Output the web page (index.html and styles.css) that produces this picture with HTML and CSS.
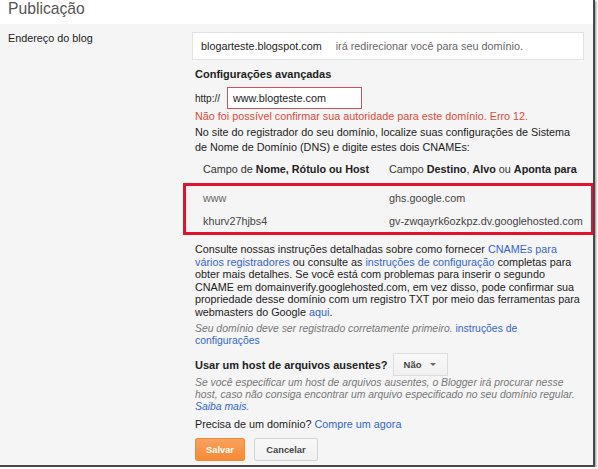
FILE: index.html
```html
<!DOCTYPE html>
<html lang="pt-BR">
<head>
<meta charset="utf-8">
<title>Publicação</title>
<link rel="stylesheet" href="styles.css">
</head>
<body>
<div class="frame">
  <div class="title">Publicação</div>
  <div class="main">
    <div class="label">Endereço do blog</div>
    <div class="content">
      <div class="addr-box">
        <span class="addr">blogarteste.blogspot.com</span>
        <span class="addr-note">irá redirecionar você para seu domínio.</span>
      </div>
      <div class="sub-head">Configurações avançadas</div>
      <div class="http-row">
        <span class="http">http://</span>
        <span class="domain-input">www.blogteste.com</span>
      </div>
      <div class="error">Não foi possível confirmar sua autoridade para este domínio. Erro 12.</div>
      <p class="dns">No site do registrador do seu domínio, localize suas configurações de Sistema de Nome de Domínio (DNS) e digite estes dois CNAMEs:</p>
      <div class="cname-head">
        <div>Campo de <b>Nome, Rótulo ou Host</b></div>
        <div>Campo <b>Destino</b>, <b>Alvo</b> ou <b>Aponta para</b></div>
      </div>
      <div class="cname-rows">
        <div class="cname-row">
          <div class="host">www</div>
          <div>ghs.google.com</div>
        </div>
        <div class="cname-row">
          <div>khurv27hjbs4</div>
          <div>gv-zwqayrk6ozkpz.dv.googlehosted.com</div>
        </div>
      </div>
      <p class="help">Consulte nossas instruções detalhadas sobre como fornecer <a href="#">CNAMEs para vários registradores</a> ou consulte as <a href="#">instruções de configuração</a> completas para obter mais detalhes. Se você está com problemas para inserir o segundo CNAME em domainverify.googlehosted.com, em vez disso, pode confirmar sua propriedade desse domínio com um registro TXT por meio das ferramentas para webmasters do Google <a href="#">aqui</a>.</p>
      <p class="note">Seu domínio deve ser registrado corretamente primeiro. <a href="#" class="upright">instruções de configurações</a></p>
      <div class="missing-row">
        <span class="sub-head inline">Usar um host de arquivos ausentes?</span>
        <span class="dropdown">Não<span class="caret"></span></span>
      </div>
      <p class="note tight">Se você especificar um host de arquivos ausentes, o Blogger irá procurar nesse host, caso não consiga encontrar um arquivo especificado no seu domínio regular. <a href="#">Saiba mais</a>.</p>
      <div class="buy">Precisa de um domínio? <a href="#">Compre um agora</a></div>
      <div class="actions">
        <button class="btn btn-save">Salvar</button>
        <button class="btn btn-cancel">Cancelar</button>
      </div>
    </div>
  </div>
</div>
</body>
</html>
```

FILE: styles.css
```css
html, body {
  margin: 0;
  padding: 0;
  background: #ffffff;
}

body {
  font-family: "Liberation Sans", Arial, sans-serif;
  color: #222;
}

.frame {
  width: 593px;
  height: 465px;
  background: #f5f5f5;
  border-right: 2px solid #474747;
  border-bottom: 2px solid #474747;
  box-shadow: 1px 1px 2px rgba(0, 0, 0, 0.45);
  overflow: hidden;
}

.title {
  height: 24px;
  background: #ffffff;
  font-size: 15.7px;
  line-height: 18px;
  color: #555;
  padding-left: 8px;
  box-sizing: border-box;
}

.main {
  display: grid;
  grid-template-columns: 195px 389px;
  font-size: 10.8px;
}

.label {
  padding: 7px 0 0 8px;
  line-height: 14px;
  font-size: 10.8px;
  color: #222;
}

.content {
  display: flex;
  flex-direction: column;
  align-items: flex-start;
}

.addr-box {
  margin-top: 8px;
  margin-left: -3px;
  width: 392px;
  height: 28px;
  box-sizing: border-box;
  background: #fff;
  border: 1px solid #e2e2e2;
  padding-left: 8px;
  display: flex;
  align-items: center;
}

.addr {
  color: #222;
}

.addr-note {
  color: #666;
  margin-left: 14px;
}

.sub-head {
  font-weight: bold;
  font-size: 11px;
  line-height: 14px;
  margin-top: 7px;
  color: #222;
}

.sub-head.inline {
  margin-top: 0;
}

.http-row {
  margin-top: 6px;
  display: flex;
  align-items: center;
  height: 22px;
}

.http {
  width: 32px;
  font-size: 10px;
  color: #222;
}

.domain-input {
  width: 135px;
  height: 22px;
  box-sizing: border-box;
  border: 1px solid #d4505a;
  background: #fff;
  padding-left: 5px;
  display: flex;
  align-items: center;
  color: #222;
}

.error {
  color: #dd4b39;
  line-height: 14px;
}

.dns {
  margin: 2px 0 0;
  line-height: 15px;
  width: 389px;
}

.cname-head,
.cname-row {
  display: grid;
  grid-template-columns: 186px auto;
  align-items: center;
}

.cname-head {
  margin-top: 7px;
  padding-left: 8px;
  line-height: 14px;
  color: #333;
  white-space: nowrap;
}

.cname-head b {
  color: #222;
}

.cname-rows {
  margin-top: 7px;
  margin-left: -12px;
  width: 411px;
  box-sizing: border-box;
  border: 3px solid #e1132c;
  padding-left: 17px;
}

.cname-row {
  height: 23px;
  color: #444;
  white-space: nowrap;
}

.host {
  color: #666;
}

.help {
  margin: 8px 0 0;
  line-height: 12.5px;
  width: 389px;
}

a {
  color: #3366cc;
  text-decoration: none;
}

.note {
  margin: 5px 0 0;
  font-size: 10.4px;
  line-height: 12px;
  font-style: italic;
  color: #777;
  width: 389px;
}

.note.tight {
  margin-top: 1px;
}

.upright {
  font-style: normal;
}

.missing-row {
  margin-top: 6px;
  display: flex;
  align-items: center;
  gap: 5px;
}

.dropdown {
  width: 55px;
  height: 23px;
  box-sizing: border-box;
  border: 1px solid #dcdcdc;
  background: linear-gradient(#f8f8f8, #f1f1f1);
  display: flex;
  align-items: center;
  padding-left: 10px;
  font-size: 9.5px;
  font-weight: bold;
  color: #444;
}

.caret {
  margin-left: 8px;
  width: 0;
  height: 0;
  border-left: 3px solid transparent;
  border-right: 3px solid transparent;
  border-top: 3px solid #666;
}

.buy {
  margin-top: 4px;
  line-height: 14px;
}

.actions {
  margin-top: 7px;
  display: flex;
  gap: 9px;
}

.btn {
  height: 23px;
  box-sizing: border-box;
  font-family: "Liberation Sans", Arial, sans-serif;
  font-size: 9.3px;
  font-weight: bold;
  padding: 0;
  border-radius: 2px;
}

.btn-save {
  width: 50px;
  background: linear-gradient(#f9a15c, #f58a36);
  border: 1px solid #f08a3a;
  color: #fff;
}

.btn-cancel {
  width: 64px;
  background: linear-gradient(#f8f8f8, #f1f1f1);
  border: 1px solid #d3d3d3;
  color: #444;
}
```
